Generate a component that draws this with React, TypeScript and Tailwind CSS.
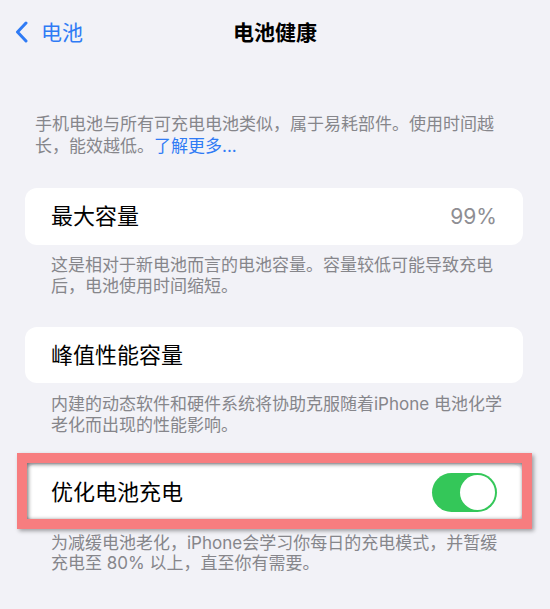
import React from "react";

const font = "font-['Inter','Noto_Sans_CJK_SC',sans-serif]";

function Toggle() {
  return (
    <div className="w-[65px] h-[39px] rounded-full bg-[#34c759] flex items-center justify-end p-[2px]">
      <div className="w-[35px] h-[35px] rounded-full bg-white" />
    </div>
  );
}

export default function App() {
  return (
    <div className={`w-[550px] h-[609px] bg-[#f2f2f7] overflow-hidden ${font}`}>
      {/* Nav bar */}
      <div className="h-[64px] grid grid-cols-[1fr_auto_1fr] items-center">
        <div className="flex items-center pl-[15px] gap-[13px] text-[#2f7bf5]">
          <svg width="13" height="22" viewBox="0 0 13 22" fill="none">
            <path d="M11 2 L2.5 11 L11 20" stroke="#2f7bf5" strokeWidth="3" strokeLinecap="round" strokeLinejoin="round" />
          </svg>
          <span className="text-[21px] leading-none">电池</span>
        </div>
        <div className="text-[21px] font-semibold text-black leading-none">电池健康</div>
        <div />
      </div>

      <div className="pt-[49px] pl-[35px] text-[17px] leading-[22px] text-[#86868b] whitespace-nowrap">
        手机电池与所有可充电电池类似，属于易耗部件。使用时间越
        <br />
        长，能效越低。<span className="text-[#2f7bf5]">了解更多...</span>
      </div>

      <div className="mt-[31px] ml-[25px] w-[498px] h-[57px] bg-white rounded-[12px] flex items-center justify-between pl-[26px] pr-[26px]">
        <span className="text-[22px] text-black">最大容量</span>
        <span className="text-[21px] text-[#8e8e93]">99%</span>
      </div>
      <div className="mt-[10px] pl-[51px] text-[17px] leading-[21px] text-[#86868b] whitespace-nowrap">
        这是相对于新电池而言的电池容量。容量较低可能导致充电
        <br />
        后，电池使用时间缩短。
      </div>

      <div className="mt-[30px] ml-[25px] w-[498px] h-[56px] bg-white rounded-[12px] flex items-center pl-[26px] pr-[26px]">
        <span className="text-[22px] text-black">峰值性能容量</span>
      </div>
      <div className="mt-[11px] pl-[51px] text-[17px] leading-[21px] text-[#86868b] whitespace-nowrap">
        内建的动态软件和硬件系统将协助克服随着iPhone 电池化学
        <br />
        老化而出现的性能影响。
      </div>

      <div className="relative mt-[28px] ml-[25px] w-[498px] h-[57px]">
        <div className="w-full h-full bg-white rounded-[12px] flex items-center justify-between pl-[26px] pr-[26px]">
          <span className="text-[22px] text-black">优化电池充电</span>
          <Toggle />
        </div>
        <div className="absolute -left-[8px] -top-[11px] -right-[9px] -bottom-[8px] border-[10px] border-[#f77d7f] shadow-[2px_2px_4px_rgba(0,0,0,0.35),inset_1px_1px_4px_rgba(0,0,0,0.6)]" />
      </div>
      <div className="mt-[12px] pl-[51px] text-[17px] leading-[20px] text-[#86868b] whitespace-nowrap">
        为减缓电池老化，iPhone会学习你每日的充电模式，并暂缓
        <br />
        充电至 80% 以上，直至你有需要。
      </div>
    </div>
  );
}
